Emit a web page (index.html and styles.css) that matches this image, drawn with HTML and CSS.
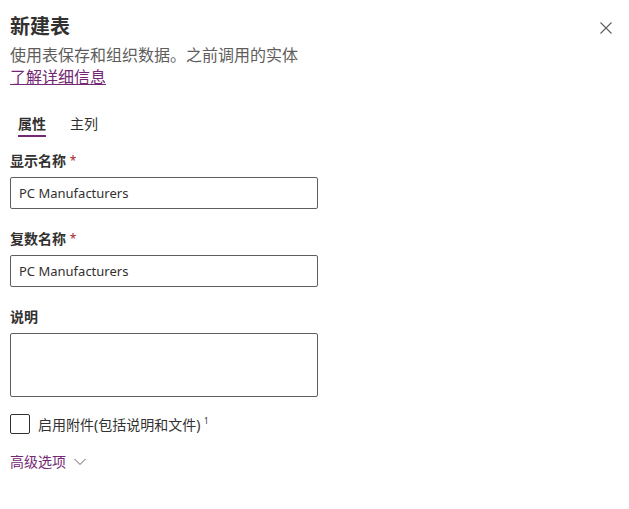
FILE: index.html
```html
<!DOCTYPE html>
<html lang="zh-CN">
<head>
  <meta charset="UTF-8">
  <title>新建表</title>
  <link rel="stylesheet" href="styles.css">
</head>
<body>
  <div class="panel">
    <div class="header">
      <h1>新建表</h1>
      <button class="close" aria-label="关闭">
        <svg width="12" height="12" viewBox="0 0 12 12"><path d="M0.5 0.5L11.5 11.5M11.5 0.5L0.5 11.5" stroke="#605e5c" stroke-width="1.1"/></svg>
      </button>
    </div>
    <p class="desc">使用表保存和组织数据。之前调用的实体</p>
    <a class="more" href="#">了解详细信息</a>

    <div class="tabs">
      <span class="tab active">属性</span>
      <span class="tab">主列</span>
    </div>

    <label class="field-label first">显示名称 <span class="req">*</span></label>
    <input class="text" type="text" value="PC Manufacturers">

    <label class="field-label">复数名称 <span class="req">*</span></label>
    <input class="text" type="text" value="PC Manufacturers">

    <label class="field-label">说明</label>
    <textarea class="text area"></textarea>

    <div class="check">
      <span class="box"></span>
      <span>启用附件(包括说明和文件) <sup>1</sup></span>
    </div>

    <div class="advanced">
      高级选项
      <svg width="12" height="8" viewBox="0 0 12 8"><path d="M0.5 1L6 6.5L11.5 1" fill="none" stroke="#605e5c" stroke-width="1"/></svg>
    </div>
  </div>
</body>
</html>
```

FILE: styles.css
```css
body {
  margin: 0;
  background: #fff;
  font-family: "Noto Sans", "Noto Sans CJK SC", sans-serif;
  color: #323130;
}

.panel {
  padding: 12px 10px 0 10px;
}

.header {
  display: flex;
  justify-content: space-between;
  align-items: flex-start;
}

h1 {
  margin: 0;
  font-size: 20px;
  font-weight: 700;
  line-height: 30px;
  color: #323130;
}

.close {
  border: none;
  background: none;
  padding: 0;
  margin: 10px 7px 0 0;
  width: 12px;
  height: 12px;
  display: flex;
}

.desc {
  margin: 2px 0 0;
  font-size: 16px;
  line-height: 22px;
  color: #605e5c;
}

.more {
  display: inline-block;
  font-size: 16px;
  line-height: 22px;
  color: #742774;
  text-decoration: underline;
}

.tabs {
  display: flex;
  gap: 24px;
  margin: 25px 0 0 8px;
}

.tab {
  font-size: 14px;
  line-height: 22px;
  border-bottom: 2px solid transparent;
}

.tab.active {
  font-weight: 600;
  border-bottom-color: #742774;
}

.field-label {
  display: block;
  height: 20px;
  font-size: 14px;
  font-weight: 700;
  line-height: 20px;
  margin: 0 0 6px;
}

.field-label.first {
  margin-top: 14px;
}

.req {
  color: #a4262c;
  font-size: 12px;
  font-weight: 400;
  line-height: 20px;
  vertical-align: top;
}

.text {
  display: block;
  box-sizing: border-box;
  width: 308px;
  height: 32px;
  margin: 0 0 20px;
  padding: 0 8px;
  border: 1px solid #605e5c;
  border-radius: 2px;
  font-family: inherit;
  font-size: 13px;
  color: #323130;
}

.area {
  height: 64px;
  margin-bottom: 0;
  resize: none;
}

.check {
  display: flex;
  align-items: center;
  gap: 8px;
  font-size: 14px;
  margin-top: 17px;
  color: #323130;
}

.box {
  width: 20px;
  height: 20px;
  box-sizing: border-box;
  border: 1px solid #323130;
  border-radius: 2px;
}

sup {
  font-size: 8px;
}

.advanced {
  display: flex;
  align-items: center;
  gap: 8px;
  margin-top: 18px;
  font-size: 14px;
  line-height: 20px;
  color: #742774;
}
```
